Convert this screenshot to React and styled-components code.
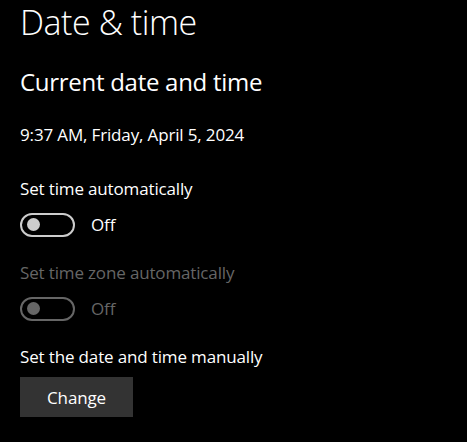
import React from "react";
import styled, { createGlobalStyle } from "styled-components";

const Global = createGlobalStyle`
  html, body { margin: 0; padding: 0; background: #000; }
  body { width: 467px; height: 442px; overflow: hidden; font-family: "Open Sans", "Noto Sans", sans-serif; color: #fff; }
`;

const Page = styled.div`
  display: flex;
  flex-direction: column;
  align-items: flex-start;
  padding: 0 0 0 20px;
  background: #000;
  height: 442px;
  box-sizing: border-box;
`;

const Title = styled.h1`
  margin: 0;
  font-weight: 300;
  font-size: 34px;
  letter-spacing: -0.45px;
  line-height: 44px;
`;

const Subtitle = styled.h2`
  margin: 22px 0 0;
  font-weight: 400;
  font-size: 24px;
  letter-spacing: -0.28px;
  line-height: 32px;
`;

const Text = styled.div`
  font-size: 17px;
  letter-spacing: -0.15px;
  line-height: 24px;
  margin-top: ${(p) => p.$mt || 0}px;
  color: ${(p) => (p.$disabled ? "#666" : "#fff")};
`;

const ToggleRow = styled.div`
  display: flex;
  align-items: center;
  gap: 16px;
  margin-top: ${(p) => p.$mt || 0}px;
  height: 25px;
`;

const Track = styled.div`
  box-sizing: border-box;
  width: 55px;
  height: 24px;
  border-radius: 12px;
  border: 2px solid ${(p) => (p.$disabled ? "#666" : "#ccc")};
  display: flex;
  align-items: center;
  padding-left: 5px;
`;

const Knob = styled.div`
  width: 13px;
  height: 13px;
  border-radius: 50%;
  background: ${(p) => (p.$disabled ? "#666" : "#ccc")};
`;

const State = styled.span`
  font-size: 17px;
  letter-spacing: -0.15px;
  color: ${(p) => (p.$disabled ? "#666" : "#fff")};
`;

const Button = styled.button`
  margin-top: ${(p) => p.$mt || 0}px;
  width: 113px;
  height: 40px;
  border: none;
  background: #333;
  color: #fff;
  font-family: inherit;
  font-size: 17px;
  letter-spacing: -0.15px;
  padding: 0;
`;

function Toggle({ disabled, mt }) {
  return (
    <ToggleRow $mt={mt}>
      <Track $disabled={disabled}>
        <Knob $disabled={disabled} />
      </Track>
      <State $disabled={disabled}>Off</State>
    </ToggleRow>
  );
}

export default function App() {
  return (
    <>
      <Global />
      <Page>
        <Title>Date &amp; time</Title>
        <Subtitle>Current date and time</Subtitle>
        <Text $mt={25}>9:37 AM, Friday, April 5, 2024</Text>
        <Text $mt={30}>Set time automatically</Text>
        <Toggle mt={11} />
        <Text $mt={24} $disabled>Set time zone automatically</Text>
        <Toggle disabled mt={11} />
        <Text $mt={24}>Set the date and time manually</Text>
        <Button $mt={8}>Change</Button>
      </Page>
    </>
  );
}
